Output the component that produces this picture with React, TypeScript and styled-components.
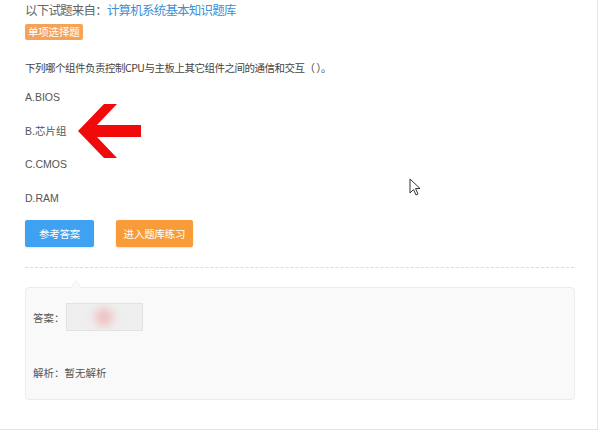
import React from "react";
import styled, { createGlobalStyle } from "styled-components";

const Global = createGlobalStyle`
  html, body { margin: 0; padding: 0; background: #ffffff; }
  body { font-family: "Noto Sans CJK SC", "Noto Sans", sans-serif; }
`;

const Page = styled.div`
  position: relative;
  width: 598px;
  height: 430px;
  border-right: 1px solid #e8e8e8;
  border-bottom: 1px solid #e3e3e3;
  background: #fff;
  padding: 0 0 0 25px;
  box-sizing: border-box;
  overflow: hidden;
`;

const Source = styled.div`
  font-size: 12.5px;
  letter-spacing: -0.8px;
  line-height: 20px;
  color: #666;
`;

const SourceLink = styled.span`
  color: #3d8fd4;
`;

const Tag = styled.div`
  width: fit-content;
  margin-top: 4px;
  height: 16px;
  line-height: 16px;
  padding: 0 3px;
  font-size: 10.5px;
  letter-spacing: -0.2px;
  color: #fff;
  background: #f6a357;
  border-radius: 2px;
`;

const Question = styled.div`
  margin-top: 20px;
  font-size: 10.5px;
  letter-spacing: -0.5px;
  line-height: 16px;
  color: #444;
`;

const Options = styled.div`
  display: flex;
  flex-direction: column;
  gap: 17.5px;
  margin-top: 13px;
`;

const Option = styled.div`
  line-height: 16px;
  font-size: 10.5px;
  color: #555;
  font-family: "Liberation Sans", "Noto Sans CJK SC", sans-serif;
`;

const Buttons = styled.div`
  display: flex;
  gap: 22px;
  margin-top: 14.5px;
`;

const Button = styled.div<{ $color: string; $w: number }>`
  width: ${(p) => p.$w}px;
  height: 27px;
  line-height: 27px;
  text-align: center;
  font-size: 10.5px;
  letter-spacing: -0.2px;
  color: #fff;
  background: ${(p) => p.$color};
  border-radius: 2px;
  box-shadow: 0 1px 2px rgba(0, 0, 0, 0.12);
`;

const Divider = styled.div`
  margin-top: 20px;
  width: 549px;
  border-top: 1px dashed #dcdcdc;
`;

const AnswerBox = styled.div`
  position: relative;
  margin-top: 19px;
  width: 550px;
  height: 113px;
  box-sizing: border-box;
  background: #f9f9f9;
  border: 1px solid #ececec;
  border-radius: 4px;
  padding: 15px 0 0 7px;
  font-size: 10.5px;
  color: #555;
  &::before {
    content: "";
    position: absolute;
    top: -8px;
    left: 44px;
    border-left: 6px solid transparent;
    border-right: 6px solid transparent;
    border-bottom: 8px solid #ececec;
  }
  &::after {
    content: "";
    position: absolute;
    top: -7px;
    left: 45px;
    border-left: 5px solid transparent;
    border-right: 5px solid transparent;
    border-bottom: 7px solid #f9f9f9;
  }
`;

const AnswerRow = styled.div`
  display: flex;
  align-items: center;
  gap: 1px;
`;

const Hidden = styled.div`
  width: 77px;
  height: 28px;
  background: #efefef;
  border: 1px solid #e2e2e2;
  box-sizing: border-box;
  position: relative;
  overflow: hidden;
  &::after {
    content: "";
    position: absolute;
    left: 28px;
    top: 4px;
    width: 18px;
    height: 18px;
    border-radius: 50%;
    background: rgba(240, 150, 150, 0.55);
    filter: blur(5px);
  }
`;

const Analysis = styled.div`
  margin-top: 34px;
  line-height: 16px;
`;

const Arrow = styled.svg`
  position: absolute;
  left: 76px;
  top: 103px;
`;

const Cursor = styled.svg`
  position: absolute;
  left: 409px;
  top: 178px;
`;

export default function App() {
  return (
    <>
      <Global />
      <Page>
        <Source>
          以下试题来自：<SourceLink>计算机系统基本知识题库</SourceLink>
        </Source>
        <Tag>单项选择题</Tag>
        <Question>下列哪个组件负责控制CPU与主板上其它组件之间的通信和交互（ ）。</Question>
        <Options>
          <Option>A.BIOS</Option>
          <Option>B.芯片组</Option>
          <Option>C.CMOS</Option>
          <Option>D.RAM</Option>
        </Options>
        <Buttons>
          <Button $color="#3fa1f2" $w={69}>参考答案</Button>
          <Button $color="#f89c3a" $w={77}>进入题库练习</Button>
        </Buttons>
        <Divider />
        <AnswerBox>
          <AnswerRow>
            答案：<Hidden />
          </AnswerRow>
          <Analysis>解析：暂无解析</Analysis>
        </AnswerBox>
        <Arrow width="68" height="58" viewBox="0 0 68 58">
          <polygon
            points="2,28 28,1 41,1 21,22 65,22 65,34 21,34 41,55 28,55"
            fill="#f00a0a"
          />
        </Arrow>
        <Cursor width="12" height="19" viewBox="0 0 12 19">
          <path
            d="M1 1 L1 15 L4.5 11.5 L7 17 L9 16 L6.5 10.5 L11 10.5 Z"
            fill="#fff"
            stroke="#333"
            strokeWidth="1"
            strokeLinejoin="round"
          />
        </Cursor>
      </Page>
    </>
  );
}
